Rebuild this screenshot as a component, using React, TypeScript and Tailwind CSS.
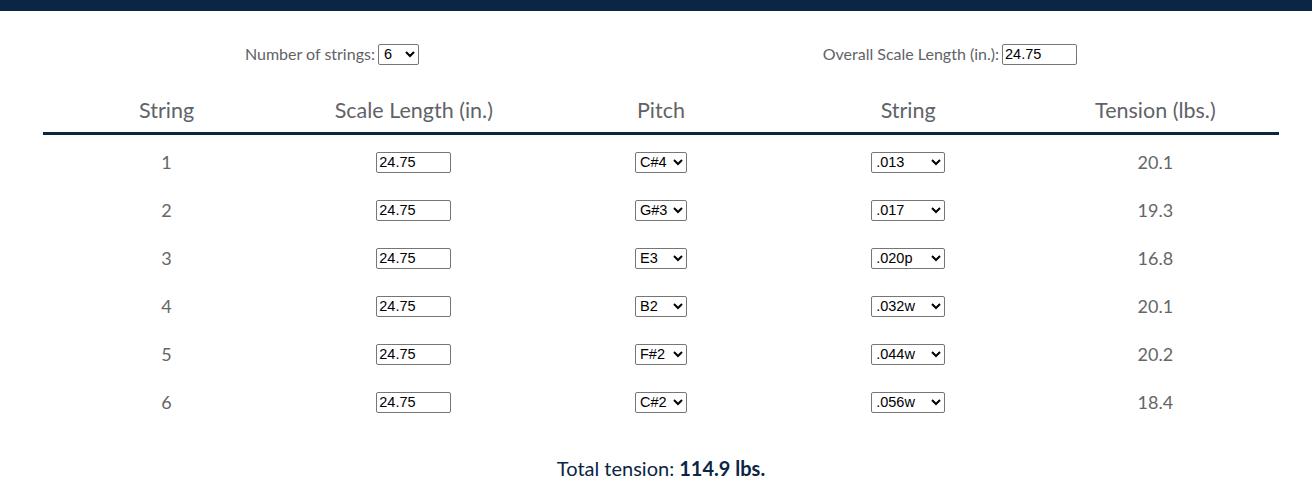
import { type FC } from "react";

const rows = [
  { n: 1, pitch: "C#4", gauge: ".013", tension: "20.1" },
  { n: 2, pitch: "G#3", gauge: ".017", tension: "19.3" },
  { n: 3, pitch: "E3", gauge: ".020p", tension: "16.8" },
  { n: 4, pitch: "B2", gauge: ".032w", tension: "20.1" },
  { n: 5, pitch: "F#2", gauge: ".044w", tension: "20.2" },
  { n: 6, pitch: "C#2", gauge: ".056w", tension: "18.4" },
];

const fieldClass =
  "h-[21px] border border-[#767676] rounded-[2px] bg-white text-black text-[14.5px] leading-none font-['Liberation_Sans',Arial,sans-serif]";

const headClass = "flex items-center justify-center text-[21.5px] text-[#5f6368]";

const App: FC = () => {
  return (
    <div className="min-h-[497px] bg-white font-['Lato',sans-serif]">
      <div className="h-[11px] bg-[#0b2545]" />

      <div className="ml-[43px] w-[1236px]">
        <div className="mt-[31px] flex justify-around items-center text-[16px] text-[#5f6368]">
          <label className="flex items-center gap-[3px]">
            Number of strings:
            <select defaultValue="6" className={`${fieldClass} w-[41px] pl-[1px]`}>
              {[4, 5, 6, 7, 8].map((v) => (
                <option key={v} value={v}>
                  {v}
                </option>
              ))}
            </select>
          </label>
          <label className="flex items-center gap-[3px]">
            Overall Scale Length (in.):
            <input
              defaultValue="24.75"
              className={`${fieldClass} w-[75px] px-[2px]`}
            />
          </label>
        </div>

        <div className="mt-[22px] grid grid-cols-5 h-[44px] border-b-[3px] border-[#0b2545] box-content">
          <div className={headClass}>String</div>
          <div className={headClass}>Scale Length (in.)</div>
          <div className={headClass}>Pitch</div>
          <div className={headClass}>String</div>
          <div className={headClass}>Tension (lbs.)</div>
        </div>

        <div className="pt-[3px]">
          {rows.map((r) => (
            <div key={r.n} className="grid grid-cols-5 h-12 items-center text-[18px] text-[#666]">
              <div className="text-center">{r.n}</div>
              <div className="flex justify-center">
                <input defaultValue="24.75" className={`${fieldClass} w-[75px] px-[2px]`} />
              </div>
              <div className="flex justify-center">
                <select defaultValue={r.pitch} className={`${fieldClass} w-[52px]`}>
                  <option value={r.pitch}>{r.pitch}</option>
                </select>
              </div>
              <div className="flex justify-center">
                <select defaultValue={r.gauge} className={`${fieldClass} w-[74px]`}>
                  <option value={r.gauge}>{r.gauge}</option>
                </select>
              </div>
              <div className="text-center">{r.tension}</div>
            </div>
          ))}
        </div>

        <div className="mt-[28px] text-center text-[20px] leading-7 text-[#0b2545]">
          Total tension: <span className="font-bold">114.9 lbs.</span>
        </div>
      </div>
    </div>
  );
};

export default App;
